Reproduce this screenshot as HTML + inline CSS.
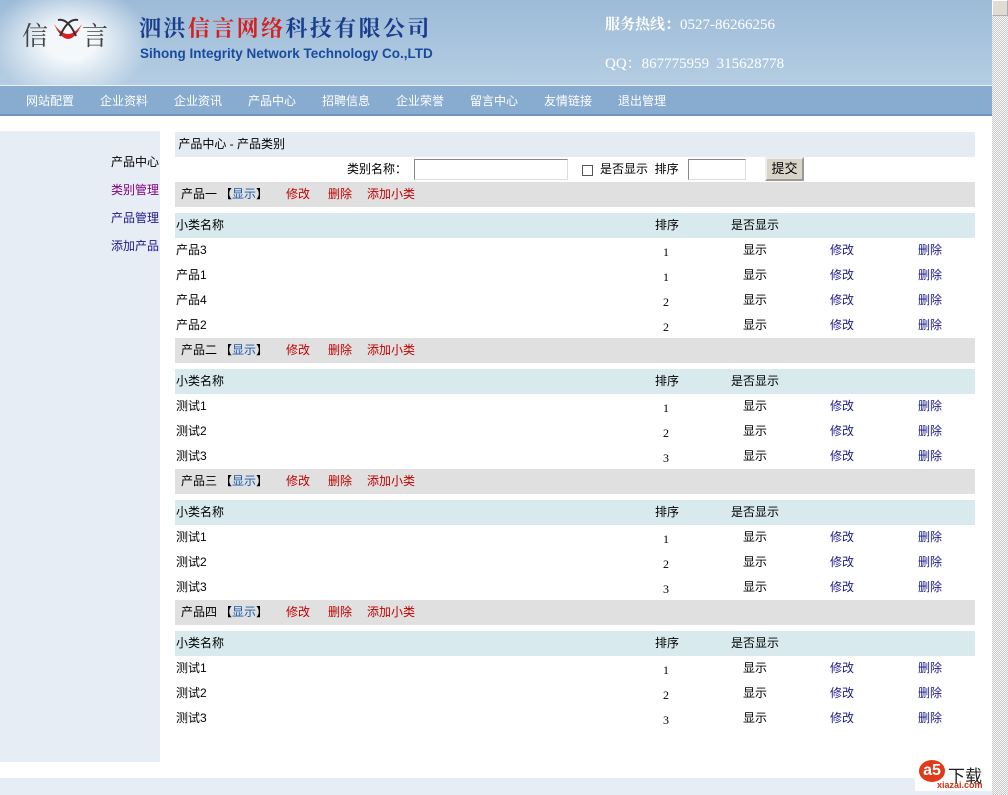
<!DOCTYPE html>
<html><head><meta charset="utf-8"><style>
*{margin:0;padding:0;box-sizing:border-box}
body{width:1008px;height:795px;overflow:hidden;background:#fff;font-family:"Liberation Sans","Noto Sans CJK SC",sans-serif;font-size:12px;color:#000;position:relative}
.abs{position:absolute}
#hdr{left:0;top:0;width:992px;height:85px;background:linear-gradient(#9dbbd8,#b4cde2)}
#nav{left:0;top:85px;width:992px;height:31px;background:#88acd0;border-top:1px solid #e8f0f8;border-bottom:2px solid #6f95bf}
#nav span{position:absolute;top:6px;color:#fff;font-size:12px}
#scroll{left:992px;top:0;width:16px;height:795px;background:repeating-conic-gradient(#c8c8c8 0 25%,#f8f8f8 0 50%) 0 0/2px 2px}
#side{left:0;top:131px;width:160px;height:631px;background:#e6edf5}
#side div{position:absolute;left:111px;font-size:12px}
#bot{left:0;top:778px;width:992px;height:17px;background:#e6edf5}
.row{position:absolute;left:175px;width:800px;height:25px;line-height:25px}
.g{background:#e0e0e0}
.s{background:#d8eaee}
.c{position:absolute;top:0}
.bl{color:#1a1a8c}
.rd{color:#c00000}
</style></head><body>
<div id="hdr" class="abs">
 <div class="abs" style="left:-10px;top:-15px;width:160px;height:115px;border-radius:50%;background:radial-gradient(closest-side,#f4f8fb 30%,rgba(200,218,236,0))"></div>
 <div class="abs" style="left:22px;top:16px;font-size:26px;color:#444;font-family:'Noto Serif CJK SC',serif">信</div>
 <div class="abs" style="left:82px;top:16px;font-size:26px;color:#444;font-family:'Noto Serif CJK SC',serif">言</div>
 <svg class="abs" style="left:50px;top:14px" width="36" height="36"><path d="M4 10 Q18 40 32 10 Q18 30 4 10Z" fill="#d42020"/><path d="M8 6 Q18 4 26 22 M28 6 Q18 4 10 22" stroke="#333" stroke-width="2" fill="none"/></svg>
 <div class="abs" style="left:139px;top:12px;font-size:22px;font-weight:bold;color:#1a3c8c;letter-spacing:2.4px;font-family:'Noto Serif CJK SC',serif">泗洪<span style="color:#d42020">信言网络</span>科技有限公司</div>
 <div class="abs" style="left:140px;top:46px;font-size:13.5px;font-weight:bold;color:#1a4a9c">Sihong Integrity Network Technology Co.,LTD</div>
 <div class="abs" style="left:605px;top:13px;font-size:15px;color:#fff;font-family:'Liberation Serif','Noto Serif CJK SC',serif"><b>服务热线：</b>0527-86266256</div>
 <div class="abs" style="left:605px;top:52px;font-size:15px;color:#fff;font-family:'Liberation Serif','Noto Serif CJK SC',serif">QQ：867775959&nbsp;&nbsp;315628778</div>
</div>
<div id="nav" class="abs">
<span style="left:26px">网站配置</span><span style="left:100px">企业资料</span><span style="left:174px">企业资讯</span><span style="left:248px">产品中心</span><span style="left:322px">招聘信息</span><span style="left:396px">企业荣誉</span><span style="left:470px">留言中心</span><span style="left:544px">友情链接</span><span style="left:618px">退出管理</span>
</div>
<div id="side" class="abs">
<div style="top:22px">产品中心</div><div style="top:50px;color:#800080">类别管理</div><div style="top:78px;color:#1a1a8c">产品管理</div><div style="top:106px;color:#1a1a8c">添加产品</div>
</div>
<div class="row" style="top:132px;background:#e4ebf3">&nbsp;产品中心 - 产品类别</div>
<div class="row" style="top:157px">
 <span class="c" style="left:172px">类别名称：</span>
 <span class="c" style="left:239px;top:2px;width:154px;height:21px;border:1px solid #888;border-right-color:#ddd;border-bottom-color:#ddd;background:#fff"></span>
 <span class="c" style="left:407px;top:8px;width:11px;height:11px;border:1px solid #555;background:#fff"></span>
 <span class="c" style="left:425px">是否显示&nbsp;&nbsp;排序</span>
 <span class="c" style="left:513px;top:2px;width:58px;height:21px;border:1px solid #888;border-right-color:#ddd;border-bottom-color:#ddd;background:#fff"></span>
 <span class="c" style="left:590px;top:0;width:39px;height:24px;line-height:20px;text-align:center;background:#d8d4c8;border:2px outset #eee;font-size:13px">提交</span>
</div>
<div id="content"></div>
<div id="bot" class="abs"></div>
<div id="scroll" class="abs"><div style="width:16px;height:16px;background:#e0dcd4;border:1px outset #fff"></div></div>
<div class="abs" style="left:915px;top:758px;width:77px;height:33px;background:#fff"><span style="position:absolute;left:4px;top:2px;width:26px;height:22px;border-radius:50%;background:#e03a1a;color:#fff;font-weight:bold;font-size:16px;text-align:center;line-height:22px">a5</span><span style="position:absolute;left:33px;top:4px;font-size:17px;color:#222">下载</span><span style="position:absolute;left:22px;top:22px;font-size:9px;color:#d03010;font-weight:bold">xiazai.com</span></div>
<script>
var groups=[["产品一",[["产品3",1],["产品1",1],["产品4",2],["产品2",2]]],["产品二",[["测试1",1],["测试2",2],["测试3",3]]],["产品三",[["测试1",1],["测试2",2],["测试3",3]]],["产品四",[["测试1",1],["测试2",2],["测试3",3]]]];
var y=182,h="";
groups.forEach(function(g){
h+='<div class="row g" style="top:'+y+'px"><span class="c" style="left:6px">'+g[0]+'</span><span class="c" style="left:45px">【<span style="color:#1a5aaa">显示</span>】</span><span class="c rd" style="left:111px">修改</span><span class="c rd" style="left:153px">删除</span><span class="c rd" style="left:192px">添加小类</span></div>';
y+=31;
h+='<div class="row s" style="top:'+y+'px"><span class="c" style="left:1px">小类名称</span><span class="c" style="left:480px">排序</span><span class="c" style="left:556px">是否显示</span></div>';
y+=25;
g[1].forEach(function(r){
h+='<div class="row" style="top:'+y+'px"><span class="c" style="left:1px">'+r[0]+'</span><span class="c" style="left:488px;top:2px;font-family:\'Liberation Serif\',serif">'+r[1]+'</span><span class="c" style="left:568px">显示</span><span class="c bl" style="left:655px">修改</span><span class="c bl" style="left:743px">删除</span></div>';
y+=25;});
});
document.getElementById("content").innerHTML=h;
</script>
</body></html>
